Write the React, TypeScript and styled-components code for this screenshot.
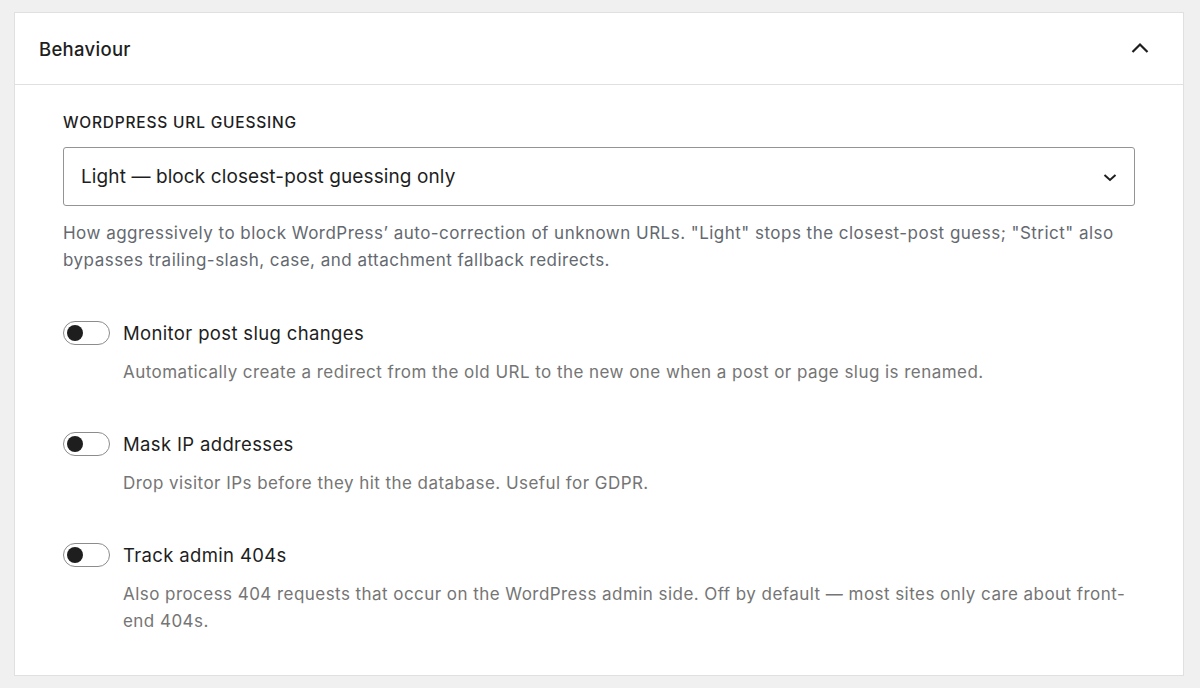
import React, { useState } from 'react'
import styled, { createGlobalStyle } from 'styled-components'

const GlobalStyle = createGlobalStyle`
  html, body {
    margin: 0;
    padding: 0;
    background: #f0f0f1;
  }
  body {
    font-family: Inter, "Noto Sans", "Liberation Sans", sans-serif;
    color: #1e1e1e;
    -webkit-font-smoothing: antialiased;
  }
`

const options = [
  { value: 'off', label: 'Off — let WordPress guess' },
  { value: 'light', label: 'Light — block closest-post guessing only' },
  { value: 'strict', label: 'Strict — block all canonical guessing' },
]

const settings = [
  {
    key: 'slug',
    title: 'Monitor post slug changes',
    help: 'Automatically create a redirect from the old URL to the new one when a post or page slug is renamed.',
  },
  {
    key: 'ip',
    title: 'Mask IP addresses',
    help: 'Drop visitor IPs before they hit the database. Useful for GDPR.',
  },
  {
    key: 'admin',
    title: 'Track admin 404s',
    help: 'Also process 404 requests that occur on the WordPress admin side. Off by default — most sites only care about front-end 404s.',
  },
]

const App = () => {
  const [open, setOpen] = useState(true)
  const [mode, setMode] = useState('light')
  const [checked, setChecked] = useState<Record<string, boolean>>({})

  return (
    <>
      <GlobalStyle />
      <Page>
        <Panel>
          <PanelHeader onClick={() => setOpen(!open)}>
            <PanelTitle>Behaviour</PanelTitle>
            <Chevron $up={open} width="24" height="24" viewBox="0 0 24 24">
              <path d="M4.5 16 12 8.5l7.5 7.5" />
            </Chevron>
          </PanelHeader>
          {open && (
            <PanelBody>
              <Field>
                <FieldLabel htmlFor="guessing">WordPress URL guessing</FieldLabel>
                <SelectWrap>
                  <Select id="guessing" value={mode} onChange={(e) => setMode(e.target.value)}>
                    {options.map((o) => (
                      <option key={o.value} value={o.value}>{o.label}</option>
                    ))}
                  </Select>
                  <SelectArrow width="24" height="24" viewBox="0 0 24 24">
                    <path d="M6.5 10 12 15l5.5-5" />
                  </SelectArrow>
                </SelectWrap>
                <FieldHelp>
                  How aggressively to block WordPress’ auto-correction of unknown URLs. "Light" stops the closest-post guess; "Strict" also bypasses trailing-slash, case, and attachment fallback redirects.
                </FieldHelp>
              </Field>

              {settings.map((s) => (
                <ToggleRow key={s.key}>
                  <ToggleLine>
                    <Toggle
                      type="button"
                      role="switch"
                      aria-checked={!!checked[s.key]}
                      $on={!!checked[s.key]}
                      onClick={() => setChecked({ ...checked, [s.key]: !checked[s.key] })}
                    >
                      <Knob $on={!!checked[s.key]} />
                    </Toggle>
                    <ToggleLabel>{s.title}</ToggleLabel>
                  </ToggleLine>
                  <ToggleHelp>{s.help}</ToggleHelp>
                </ToggleRow>
              ))}
            </PanelBody>
          )}
        </Panel>
      </Page>
    </>
  )
}

const Page = styled.div`
  padding: 12px 16px 12px 14px;
`

const Panel = styled.section`
  background: #fff;
  border: 1px solid #e0e0e0;
  box-sizing: border-box;
  height: 664px;
  overflow: hidden;
`

const PanelHeader = styled.div`
  display: flex;
  align-items: center;
  justify-content: space-between;
  height: 72px;
  padding: 1px 31px 0 24px;
  border-bottom: 1px solid #e0e0e0;
  box-sizing: border-box;
  cursor: pointer;
`

const PanelTitle = styled.h2`
  margin: 0;
  font-size: 18.5px;
  font-weight: 500;
  letter-spacing: 0.3px;
  color: #1e1e1e;
`

const Chevron = styled.svg<{ $up: boolean }>`
  margin-top: -2px;
  fill: none;
  stroke: #1e1e1e;
  stroke-width: 2.2;
  transform: ${(p) => (p.$up ? 'none' : 'rotate(180deg)')};
`

const PanelBody = styled.div`
  padding: 28px 48px 0 48px;
  display: flex;
  flex-direction: column;
`

const Field = styled.div`
  display: flex;
  flex-direction: column;
  margin-bottom: 45px;
`

const FieldLabel = styled.label`
  font-size: 15.5px;
  font-weight: 500;
  text-transform: uppercase;
  letter-spacing: 0.8px;
  line-height: 20px;
  margin-bottom: 14px;
`

const SelectWrap = styled.div`
  position: relative;
`

const Select = styled.select`
  appearance: none;
  width: 100%;
  height: 59px;
  box-sizing: border-box;
  border: 1px solid #949494;
  border-radius: 3px;
  background: #fff;
  padding: 0 48px 0 17px;
  font-family: inherit;
  font-size: 19px;
  letter-spacing: 0.1px;
  color: #1e1e1e;
  outline: none;
`

const SelectArrow = styled.svg`
  position: absolute;
  right: 13px;
  top: 50%;
  transform: translateY(-50%);
  fill: none;
  stroke: #1e1e1e;
  stroke-width: 2;
  pointer-events: none;
`

const FieldHelp = styled.p`
  margin: 14px 0 0;
  font-size: 17px;
  letter-spacing: 0.48px;
  line-height: 27px;
  color: #646970;
`

const ToggleRow = styled.div`
  display: flex;
  flex-direction: column;
  margin-bottom: 44px;

  &:last-child {
    margin-bottom: 0;
  }
`

const ToggleLine = styled.div`
  display: flex;
  align-items: center;
  gap: 13px;
  height: 28px;
`

const Toggle = styled.button<{ $on: boolean }>`
  position: relative;
  width: 47px;
  height: 24px;
  padding: 0;
  box-sizing: border-box;
  border-radius: 12px;
  border: 1px solid ${(p) => (p.$on ? '#3858e9' : '#8c8c8c')};
  background: ${(p) => (p.$on ? '#3858e9' : '#fff')};
  cursor: pointer;
  flex: none;
`

const Knob = styled.span<{ $on: boolean }>`
  position: absolute;
  top: 3px;
  left: ${(p) => (p.$on ? '26px' : '3px')};
  width: 16px;
  height: 16px;
  border-radius: 50%;
  background: ${(p) => (p.$on ? '#fff' : '#1e1e1e')};
`

const ToggleLabel = styled.span`
  font-size: 18.5px;
  letter-spacing: 0.35px;
  color: #1e1e1e;
`

const ToggleHelp = styled.p`
  margin: 12px 0 0 60px;
  font-size: 17px;
  letter-spacing: 0.45px;
  line-height: 27px;
  color: #757575;
`

export default App
